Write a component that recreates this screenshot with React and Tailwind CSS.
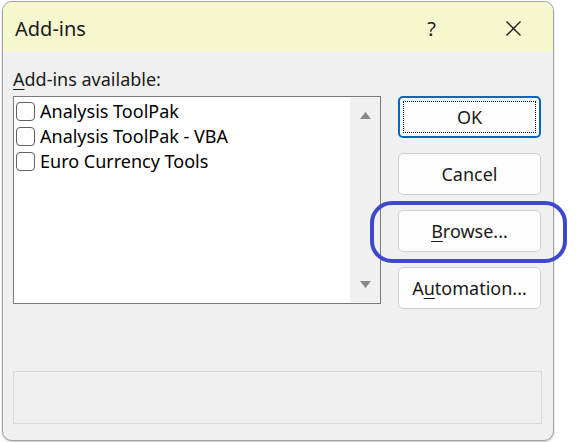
const items = ['Analysis ToolPak', 'Analysis ToolPak - VBA', 'Euro Currency Tools']

function DialogButton({ children, focused = false }) {
  return (
    <button
      className={
        'h-[42px] w-[143px] rounded-[5px] bg-[#fdfdfd] text-[18px] text-[#1a1a1a] flex items-center justify-center ' +
        (focused
          ? 'border-2 border-[#0067c0] outline-1 outline-dotted outline-black outline-offset-[-6px]'
          : 'border border-[#d0d0d0]')
      }
    >
      {children}
    </button>
  )
}

function Checkbox() {
  return <span className="w-[19px] h-[19px] rounded-[4px] border border-[#616161] bg-white shrink-0" />
}

export default function App() {
  return (
    <div className="w-[579px] h-[442px] bg-white relative overflow-hidden font-['Segoe_UI','Noto_Sans',sans-serif]">
      <div className="ml-[2px] mt-[1px] w-[552px] h-[440px] rounded-[10px] border border-[#a3a3a3] bg-[#f0f0f0] overflow-hidden flex flex-col shadow-[0_1px_2px_rgba(0,0,0,0.25)]">
        {/* title bar */}
        <div className="h-[50px] bg-[#f7f7cf] flex items-center pl-[12px] pt-[3px] shrink-0">
          <span className="text-[20px] text-[#1b1b1b] leading-none">Add-ins</span>
          <span className="ml-auto text-[20px] text-[#1b1b1b] leading-none">?</span>
          <svg className="ml-[70px] mr-[32px]" width="15" height="15" viewBox="0 0 15 15">
            <path d="M0.5 0.5 L14.5 14.5 M14.5 0.5 L0.5 14.5" stroke="#1b1b1b" strokeWidth="1.3" fill="none" />
          </svg>
        </div>

        {/* body */}
        <div className="flex-1 flex flex-col pl-[10px] pr-[11px]">
          <div className="h-[44px] flex items-end pb-[8px] text-[18px] text-[#1a1a1a] leading-none">
            <span>
              <span className="underline underline-offset-[3px]">A</span>dd-ins available:
            </span>
          </div>

          <div className="flex gap-[17px]">
            <div className="w-[368px] h-[208px] border border-[#7a7a7a] bg-white flex">
              <ul className="flex-1 pt-[2px] pl-[2px]">
                {items.map(name => (
                  <li key={name} className="h-[25px] flex items-center gap-[5px] text-[18px] text-black">
                    <Checkbox />
                    <span>{name}</span>
                  </li>
                ))}
              </ul>
              <div className="w-[30px] bg-[#f0f0f0] flex flex-col items-center justify-between py-[15px]">
                <svg width="11" height="7" viewBox="0 0 11 7">
                  <path d="M5.5 0 L11 7 L0 7 Z" fill="#8a8a8a" />
                </svg>
                <svg width="11" height="7" viewBox="0 0 11 7">
                  <path d="M0 0 L11 0 L5.5 7 Z" fill="#8a8a8a" />
                </svg>
              </div>
            </div>

            <div className="flex flex-col gap-[15px]">
              <DialogButton focused>OK</DialogButton>
              <DialogButton>Cancel</DialogButton>
              <DialogButton>
                <span>
                  <span className="underline underline-offset-[3px]">B</span>rowse...
                </span>
              </DialogButton>
              <DialogButton>
                <span>
                  A<span className="underline underline-offset-[3px]">u</span>tomation...
                </span>
              </DialogButton>
            </div>
          </div>

          <div className="mt-[62px] h-[53px] border border-[#d9d9d9] bg-[#f0f0f0]" />
        </div>
      </div>

      {/* hand-drawn highlight around Browse */}
      <div className="absolute left-[370px] top-[201px] w-[197px] h-[62px] rounded-[22px] border-[4px] border-[#3f48cc]" />
    </div>
  )
}
